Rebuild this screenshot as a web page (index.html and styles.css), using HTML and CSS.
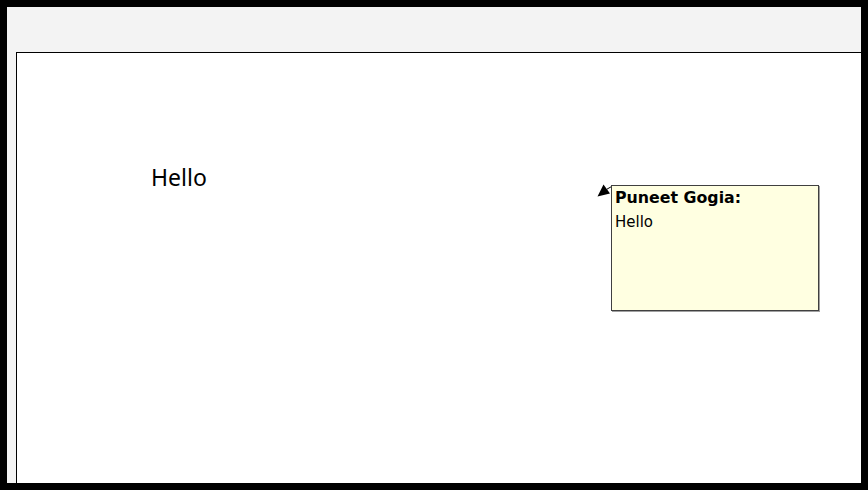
FILE: index.html
```html
<!DOCTYPE html>
<html>
<head>
<meta charset="utf-8">
<link rel="stylesheet" href="styles.css">
</head>
<body>
<div class="frame">
  <div class="sheet">
    <div class="cell-text">Hello</div>
    <svg class="arrow" width="26" height="22" viewBox="0 0 26 22">
      <line x1="16.7" y1="9.3" x2="22.5" y2="6" stroke="#000" stroke-width="1"/>
      <polygon points="7.5,16.5 20,13.5 13.5,4.5" fill="#000"/>
    </svg>
    <div class="comment">
      <div class="author">Puneet Gogia:</div>
      <div class="body">Hello</div>
    </div>
  </div>
</div>
</body>
</html>
```

FILE: styles.css
```css
html, body {
  margin: 0;
  padding: 0;
  background: #000;
}
.frame {
  margin: 7px;
  height: 476px;
  background: #f3f3f3;
  display: flex;
  flex-direction: column;
  padding: 45px 0 0 9px;
  box-sizing: border-box;
}
.sheet {
  flex: 1;
  background: #fff;
  border-top: 1px solid #000;
  border-left: 1px solid #000;
  position: relative;
}
.cell-text {
  font-family: "Noto Sans", "Open Sans", sans-serif;
  font-size: 23px;
  line-height: 30px;
  color: #000;
  margin: 109px 0 0 134px;
}
.arrow {
  position: absolute;
  left: 573px;
  top: 127px;
}
.comment {
  position: absolute;
  left: 594px;
  top: 132px;
  width: 203px;
  height: 124px;
  background: #ffffe1;
  border: 1px solid #404040;
  box-shadow: 1px 1px 0 #a0a0a0;
  font-family: "DejaVu Sans", sans-serif;
  font-size: 15.8px;
  line-height: 24px;
  color: #000;
  padding-left: 3px;
}
.author {
  font-weight: bold;
}
.body {
  font-size: 15px;
}
```
